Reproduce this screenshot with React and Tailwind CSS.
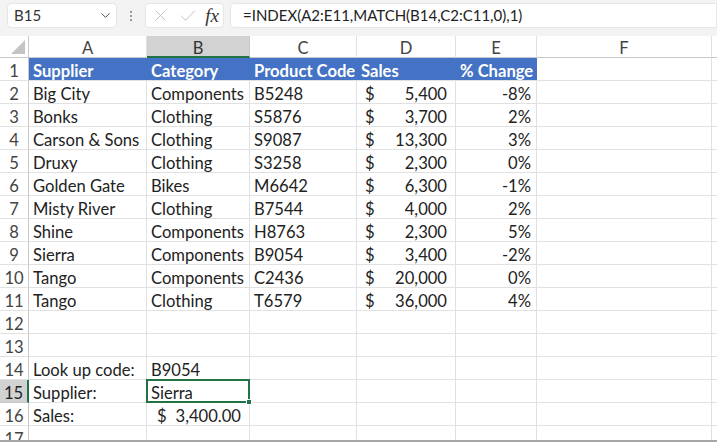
import { ChevronDown, X, Check } from "lucide-react";

const rows = [
  ["Big City", "Components", "B5248", "5,400", "-8%"],
  ["Bonks", "Clothing", "S5876", "3,700", "2%"],
  ["Carson & Sons", "Clothing", "S9087", "13,300", "3%"],
  ["Druxy", "Clothing", "S3258", "2,300", "0%"],
  ["Golden Gate", "Bikes", "M6642", "6,300", "-1%"],
  ["Misty River", "Clothing", "B7544", "4,000", "2%"],
  ["Shine", "Components", "H8763", "2,300", "5%"],
  ["Sierra", "Components", "B9054", "3,400", "-2%"],
  ["Tango", "Components", "C2436", "20,000", "0%"],
  ["Tango", "Clothing", "T6579", "36,000", "4%"],
];

const cols = ["A", "B", "C", "D", "E", "F", ""];

const cell = "border-r border-b border-[#e1e1e1] h-[23px] px-[4px] flex items-end pb-[1px] leading-[16px] whitespace-nowrap overflow-hidden";

const RowHead = ({ n, active }) => (
  <div
    className={
      active
        ? "h-[23px] border-b border-[#c8c8c8] border-r-2 border-r-[#217346] bg-[#d2d2d2] flex items-end justify-center pb-[1px] leading-[16px] text-[#222]"
        : "h-[23px] border-b border-[#e1e1e1] border-r border-r-[#c8c8c8] flex items-end justify-center pb-[1px] leading-[16px] text-[#444]"
    }
  >
    {n}
  </div>
);

const Money = ({ v }) => (
  <div className={cell + " justify-between pl-[8px] pr-[8px]"}>
    <span>$</span>
    <span>{v}</span>
  </div>
);

const Empty = ({ n }) =>
  Array.from({ length: n }).map((_, i) => <div key={i} className={cell}></div>);

export default function App() {
  return (
    <div className="w-[717px] h-[442px] overflow-hidden bg-white text-[#222] font-['Lato',sans-serif] text-[16.6px] border-b-2 border-[#a6a6a6]">
      {/* formula bar */}
      <div className="h-[36px] bg-[#f3f3f3] flex items-start pt-[3px] pl-[7px] gap-[4px]">
        <div className="w-[110px] h-[25px] bg-white rounded-[4px] border border-[#e6e6e6] flex items-center justify-between pl-[6px] pr-[3px] text-[15px] text-[#333]">
          <span>B15</span>
          <ChevronDown size={15} strokeWidth={1.6} className="text-[#555]" />
        </div>
        <div className="w-[20px] h-[25px] flex flex-col items-center justify-center gap-[2px]">
          <span className="w-[2px] h-[2px] bg-[#999]"></span>
          <span className="w-[2px] h-[2px] bg-[#999]"></span>
          <span className="w-[2px] h-[2px] bg-[#999]"></span>
        </div>
        <div className="w-[79px] h-[25px] bg-white rounded-[4px] border border-[#e6e6e6] flex items-center justify-between pl-[5px] pr-[4px]">
          <X size={19} strokeWidth={1.1} className="text-[#bbb]" />
          <Check size={20} strokeWidth={1.1} className="text-[#bbb]" />
          <span className="font-['Liberation_Serif',serif] italic text-[19px] text-[#333] leading-none">fx</span>
        </div>
        <div className="ml-[2px] flex-1 h-[25px] bg-white rounded-l-[4px] border border-[#e6e6e6] flex items-center pl-[12px] text-[15px] text-[#222]">
          =INDEX(A2:E11,MATCH(B14,C2:C11,0),1)
        </div>
      </div>

      {/* grid */}
      <div className="grid grid-cols-[29px_118px_103px_107px_99px_81px_175px_1fr]">
        {/* column headers */}
        <div className="h-[22px] border-r border-b border-[#c8c8c8] relative">
          <div className="absolute right-[3px] bottom-[3px] w-0 h-0 border-l-[14px] border-l-transparent border-b-[14px] border-b-[#c4c4c4]"></div>
        </div>
        {cols.map((c) => (
          <div
            key={c + "h"}
            className={
              c === "B"
                ? "h-[22px] bg-[#d2d2d2] border-r border-[#c8c8c8] border-b-2 border-b-[#217346] flex items-center justify-center pt-[4px] text-[#333]"
                : "h-[22px] border-r border-[#e1e1e1] border-b border-b-[#c8c8c8] flex items-center justify-center pt-[4px] text-[#444]"
            }
          >
            {c}
          </div>
        ))}

        {/* row 1 */}
        <RowHead n={1} />
        {["Supplier", "Category", "Product Code", "Sales", "% Change"].map((h) => (
          <div key={h} className="h-[23px] bg-[#4472c4] border-b border-[#e1e1e1] px-[4px] flex items-end pb-[1px] leading-[16px] text-white font-bold whitespace-nowrap">
            {h}
          </div>
        ))}
        <Empty n={2} />

        {rows.map((r, i) => (
          <div key={i} className="contents">
            <RowHead n={i + 2} />
            <div className={cell}>{r[0]}</div>
            <div className={cell}>{r[1]}</div>
            <div className={cell}>{r[2]}</div>
            <Money v={r[3]} />
            <div className={cell + " justify-end pr-[5px]"}>{r[4]}</div>
            <Empty n={2} />
          </div>
        ))}

        <RowHead n={12} />
        <Empty n={7} />
        <RowHead n={13} />
        <Empty n={7} />

        <RowHead n={14} />
        <div className={cell}>Look up code:</div>
        <div className={cell}>B9054</div>
        <Empty n={5} />

        <RowHead n={15} active />
        <div className={cell}>Supplier:</div>
        <div className="border-2 border-[#217346] px-[3px] flex items-end pb-[0px] leading-[16px] relative -mt-[1px] -ml-[1px] h-[24px]">
          Sierra
          <span className="absolute -right-[4px] -bottom-[4px] w-[6px] h-[6px] bg-[#217346] border border-white"></span>
        </div>
        <Empty n={5} />

        <RowHead n={16} />
        <div className={cell}>Sales:</div>
        <div className={cell + " justify-between pl-[10px] pr-[8px]"}>
          <span>$</span>
          <span>3,400.00</span>
        </div>
        <Empty n={5} />

        <RowHead n={17} />
        <Empty n={7} />
      </div>
    </div>
  );
}
